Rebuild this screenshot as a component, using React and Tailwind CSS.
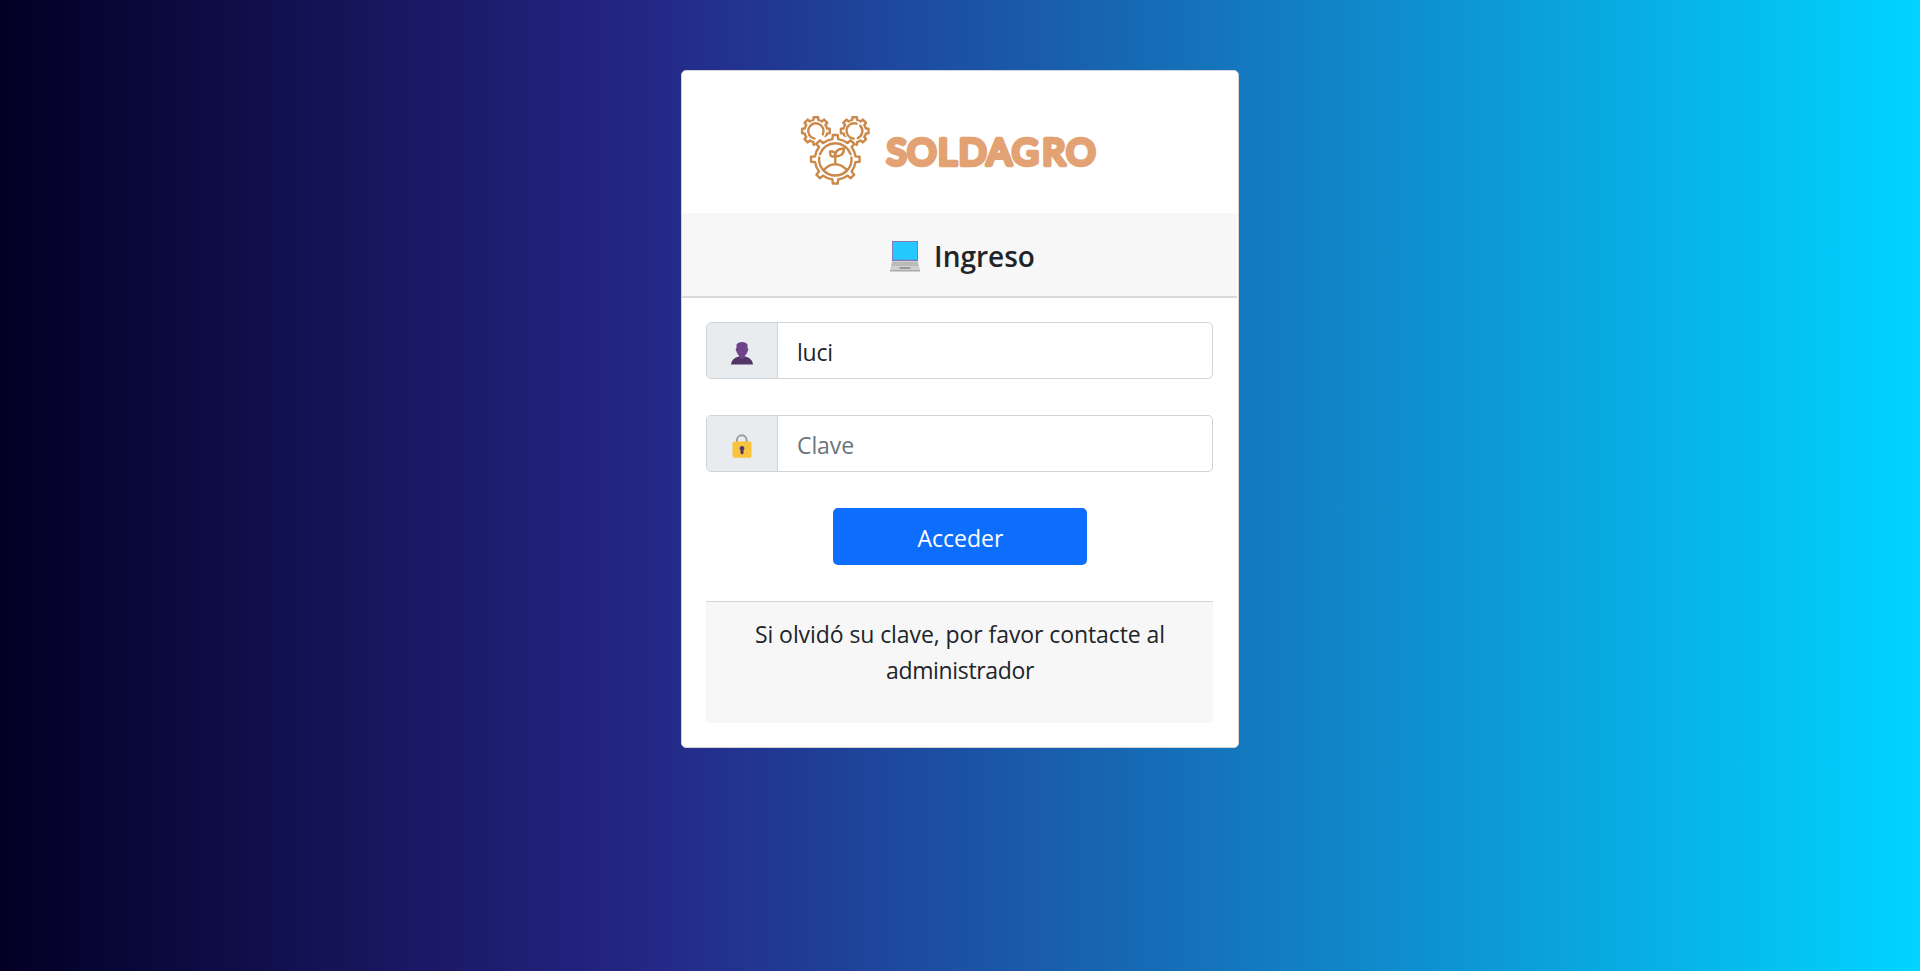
const C = '#cb8848';

function Gear({ cx, cy, r, teeth, depth, base = 0.3, tip = 0.19 }) {
  const pts = [];
  const step = (Math.PI * 2) / teeth;
  const at = (a, q) => `${(cx + Math.cos(a) * q).toFixed(2)} ${(cy + Math.sin(a) * q).toFixed(2)}`;
  for (let i = 0; i < teeth; i++) {
    const a = i * step - Math.PI / 2;
    pts.push(`${i ? `A${r} ${r} 0 0 1 ` : 'M'}${at(a - base * step, r)}`);
    pts.push(`L${at(a - tip * step, r + depth)}L${at(a + tip * step, r + depth)}L${at(a + base * step, r)}`);
  }
  pts.push(`A${r} ${r} 0 0 1 ${at(-Math.PI / 2 - base * step, r)}`);
  return <path d={pts.join('')} fill="none" stroke={C} />;
}

function Logo() {
  return (
    <svg className="h-[74px] w-[74px] shrink-0" viewBox="0 0 74 74" fill="none" stroke={C} strokeWidth="2.4" strokeLinecap="round" strokeLinejoin="round">
      <Gear cx={16.9} cy={17} r={11.4} teeth={8} depth={2.6} base={0.27} tip={0.21} />
      <Gear cx={55.7} cy={17} r={11.4} teeth={8} depth={2.6} base={0.27} tip={0.21} />
      <path d="M15.500 24.600A7.700 7.700 0 1 1 23.800 20.400M57.600 9.600A7.700 7.700 0 1 0 54.700 24.600M61.200 11.700A7.700 7.700 0 0 1 58.800 24.100" />
      <circle cx="36.3" cy="45.3" r="24.5" fill="white" stroke="none" />
      <Gear cx={36.3} cy={45.3} r={20.4} teeth={8} depth={4} base={0.18} tip={0.13} />
      <path d="M20.200 43.500A16.200 16.200 0 1 0 52.400 43.500M21 40.200A16.200 16.200 0 0 1 51.600 40.200" />
      <path d="M24.500 56.200Q36.300 44.500 48.100 56.200M36.300 50V40M36.300 42.500H33.500Q31 42.500 31 37.500H33.500Q36.300 38 36.300 42.500Q36 34.500 45 34.500Q45 42.500 36.300 42.500" />
    </svg>
  );
}

function Laptop() {
  return (
    <svg className="h-[31px] w-[30px]" viewBox="0 0 30 31">
      <path d="M2 0h26v20H2z" fill="#8378b8" />
      <path d="M3 1h24v17.700H3z" fill="#26c9ff" />
      <path d="M2 20h26l2 9H0z" fill="#d0d0d0" />
      <path d="M0 29h30v1.500H0z" fill="#aaa" />
      <path d="M2.500 22h25M2 24h26" stroke="#a5a5a5" strokeWidth="1.4" strokeDasharray="1.3 .6" />
      <path d="M10 26h10l1 2H9z" fill="#999" />
    </svg>
  );
}

function User() {
  return (
    <svg className="h-[24px] w-[22px]" viewBox="0 0 22 24">
      <path d="M0 23.500C.500 19 3.500 16.500 8 15.500h6c4.500 1 7.500 3.500 8 8z" fill="#533566" />
      <path d="M5.500 3.500Q7 1 11 1T16.500 3.500V7c1 0 1 3 0 3.300-.5 2-1.300 3.400-2.500 4.300v1.800Q11 19 8 16.400v-1.800C6.800 13.700 6 12.300 5.500 10.300 4.500 10 4.500 7 5.500 7z" fill="#6e438b" />
    </svg>
  );
}

function Lock() {
  return (
    <svg className="h-[24px] w-[20px]" viewBox="0 0 20 24">
      <path d="M5 9V6a4.800 4.800 0 0 1 9.600 0v3" fill="none" stroke="#9c9c9c" strokeWidth="1.900" />
      <rect x=".500" y="7.500" width="19" height="16.300" rx="1.800" fill="#fac33c" />
      <path d="M10 12a2.400 2.400 0 0 1 1.500 4.300v3.200q-1.500 1.500-3 0v-3.200A2.400 2.400 0 0 1 10 12z" fill="#493b68" />
    </svg>
  );
}

function Field({ icon, children }) {
  return (
    <div className="flex h-[57px] overflow-hidden rounded-[5px] border border-[#ced4da] bg-white">
      <div className="flex w-[71px] items-center justify-center border-r border-[#ced4da] bg-[#e9ecef] pt-[5px]">{icon}</div>
      <div className="flex flex-1 items-center pl-[19px] pt-[3px]">{children}</div>
    </div>
  );
}

export default function App() {
  return (
    <div className="flex h-[971px] w-full items-start justify-center bg-[linear-gradient(90deg,#020024_0%,#252585_33%,#00d4ff_100%)] pt-[70px] font-['Open_Sans',sans-serif] text-[23px] text-[#212529]">
      <main className="h-[678px] w-[558px] overflow-hidden rounded-[5px] border border-[#d3d3d8] bg-white">
        <div className="flex h-[142px] pl-[117px] pt-[43px]">
          <Logo />
          <svg className="ml-[9px] mt-[16px] h-[44px] w-[220px]" viewBox="0 0 220 44">
            <text x="4.7 25.3 56 76.8 104.7 130 160.3 184.3" y="35" fontFamily="Lato, sans-serif" fontWeight="400" fontSize="36.5" fill="#e3a273" stroke="#e3a273" strokeWidth="4.7" strokeLinejoin="round">SOLDAGRO</text>
          </svg>
        </div>
        <header className="mr-px flex h-[85px] items-start justify-center gap-[14px] border-b-2 border-[#d9d9d9] bg-[#f7f7f7] pl-[6px] pt-[28px]">
          <Laptop />
          <h1 className="-mt-[3px] text-[28px] font-semibold leading-[36px]">Ingreso</h1>
        </header>
        <div className="flex flex-col pl-[24px] pr-[25px] pt-[24px]">
          <Field icon={<User />}><span className="tracking-[-0.2px]">luci</span></Field>
          <div className="h-[36px]" />
          <Field icon={<Lock />}><span className="tracking-[-0.1px] text-[#6c757d]">Clave</span></Field>
          <button className="mt-[36px] h-[57px] w-[254px] self-center rounded-[5px] bg-[#0d6efd] pl-[2px] pt-[3px] text-white">Acceder</button>
          <footer className="mt-[36px] h-[122px] rounded-b-[4px] border-t border-[#d8d8d8] bg-[#f7f7f7] pl-[21px] pr-[20px] pt-[14px] text-center leading-[36px] tracking-[-0.08px]">
            Si olvidó su clave, por favor contacte al<br /><span className="tracking-[-0.35px]">administrador</span>
          </footer>
        </div>
      </main>
    </div>
  );
}
